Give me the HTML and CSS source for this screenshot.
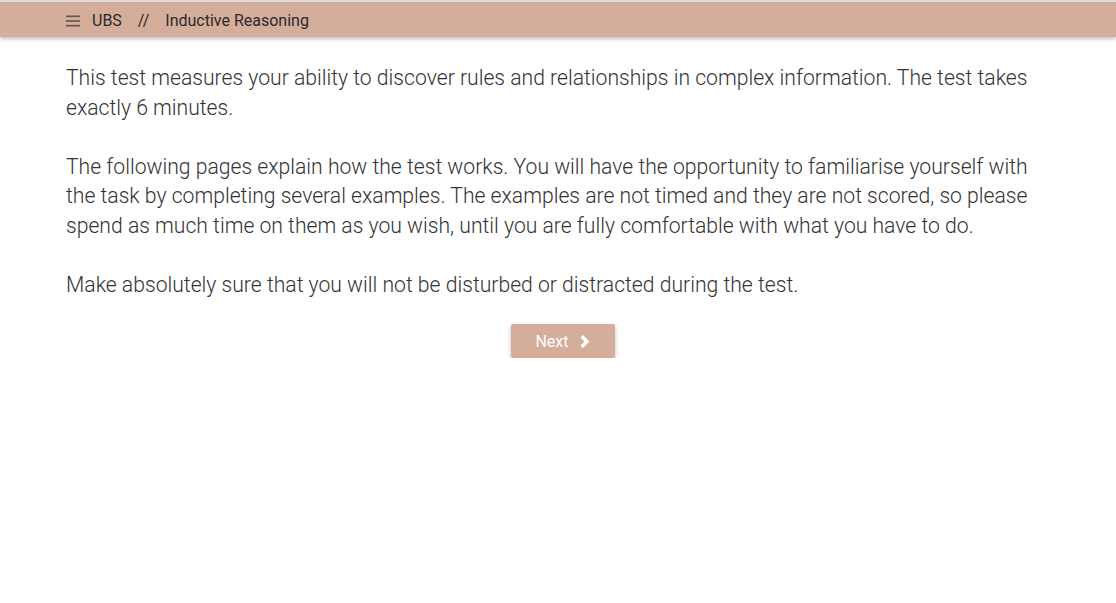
FILE: index.html
```html
<!DOCTYPE html>
<html lang="en">
<head>
    <meta charset="UTF-8">
    <meta name="viewport" content="width=device-width, initial-scale=1.0">
    <title>UBS // Inductive Reasoning</title>
    <link rel="stylesheet" href="styles.css">
</head>
<body>

<div class="topbar">
    <span class="menu">
        <svg width="14" height="12" viewBox="0 0 14 12">
            <rect x="0" y="0.5" width="14" height="1.6" fill="#65534b"/>
            <rect x="0" y="5.2" width="14" height="1.6" fill="#65534b"/>
            <rect x="0" y="9.9" width="14" height="1.6" fill="#65534b"/>
        </svg>
    </span>
    <span class="brand">UBS</span>
    <span class="sep">//</span>
    <span class="title">Inductive Reasoning</span>
</div>

<div class="content">
    <p>This test measures your ability to discover rules and relationships in complex information. The test takes exactly 6 minutes.</p>
    <p>The following pages explain how the test works. You will have the opportunity to familiarise yourself with the task by completing several examples. The examples are not timed and they are not scored, so please spend as much time on them as you wish, until you are fully comfortable with what you have to do.</p>
    <p class="last">Make absolutely sure that you will not be disturbed or distracted during the test.</p>

    <div class="actions">
        <button class="next" type="button">
            Next
            <svg width="12" height="15" viewBox="0 0 12 15">
                <path d="M1.5 3.5 L4 1 L10.5 7.5 L4 14 L1.5 11.5 L5.5 7.5 Z" fill="#fff"/>
            </svg>
        </button>
    </div>
</div>

</body>
</html>
```

FILE: styles.css
```css
body {
    margin: 0;
    font-family: Roboto, "Liberation Sans", sans-serif;
    color: #333;
    background: #fff;
}

.topbar {
    border-top: 2px solid #dcdcdc;
    box-sizing: border-box;
    height: 37px;
    padding-top: 2px;
    background-color: #d5ad9b;
    display: flex;
    align-items: center;
    padding-left: 66px;
    font-size: 16px;
    color: #2a2a2a;
    box-shadow: 0 2px 4px rgba(0, 0, 0, 0.25);
}

.menu {
    display: flex;
    align-items: center;
    margin-right: 12px;
}

.sep {
    margin: 0 16px 0 16px;
}

.content {
    padding: 26px 66px 0 66px;
}

.content p {
    font-size: 21.15px;
    font-weight: 300;
    line-height: 29.5px;
    margin: 0 0 29.5px 0;
}

.content p.last {
    margin-bottom: 25px;
}

.actions {
    display: flex;
    justify-content: center;
    padding-left: 10px;
}

.next {
    background-color: #d5ad9b;
    color: #fff;
    border: none;
    border-radius: 2px;
    font-family: Roboto, "Liberation Sans", sans-serif;
    font-size: 16px;
    width: 104px;
    height: 34px;
    display: flex;
    align-items: center;
    justify-content: center;
    gap: 10px;
    padding: 0;
    box-shadow: 0 2px 4px rgba(0, 0, 0, 0.25);
    cursor: pointer;
}
```
